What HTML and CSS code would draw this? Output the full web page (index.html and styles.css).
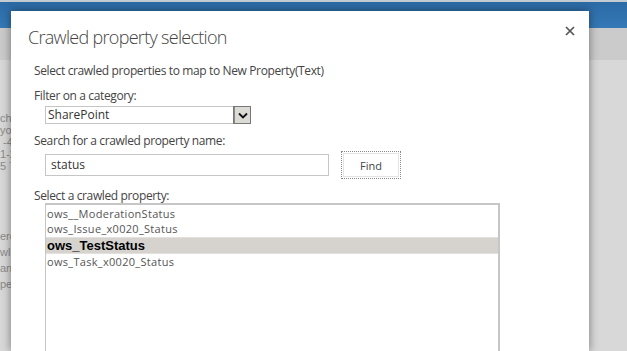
FILE: index.html
```html
<!DOCTYPE html>
<html lang="en">
<head>
    <meta charset="UTF-8">
    <title>Crawled property selection</title>
    <link rel="stylesheet" href="styles.css">
</head>
<body>

<div class="page">
    <div class="suite-bar"></div>
    <div class="ribbon"></div>
    <div class="page-body">
        <div class="page-text top">
            <div>ch</div>
            <div>yo</div>
            <div>&nbsp;-4</div>
            <div>1-2</div>
            <div>5 7</div>
        </div>
        <div class="page-text bottom">
            <div>erc</div>
            <div>wl</div>
            <div>ana</div>
            <div>pe</div>
        </div>
    </div>
</div>

<div class="dialog">
    <div class="dialog-head">
        <h1 class="dialog-title">Crawled property selection</h1>
        <span class="close-btn">
            <svg width="10" height="10" viewBox="0 0 10 10"><path d="M1 1 L9 9 M9 1 L1 9" stroke="#555" stroke-width="1.7"/></svg>
        </span>
    </div>
    <div class="dialog-body">
        <p class="intro">Select crawled properties to map to New Property(Text)</p>

        <div class="field">
            <label class="field-label">Filter on a category:</label>
            <div class="select">
                <span class="select-value">SharePoint</span>
                <span class="select-arrow">
                    <svg width="10" height="7" viewBox="0 0 10 7"><path d="M1 1.5 L5 5.5 L9 1.5" fill="none" stroke="#111" stroke-width="1.8"/></svg>
                </span>
            </div>
        </div>

        <div class="field">
            <label class="field-label">Search for a crawled property name:</label>
            <div class="search-row">
                <div class="text-input">status</div>
                <button class="find-btn">Find</button>
            </div>
        </div>

        <div class="field list-field">
            <label class="field-label">Select a crawled property:</label>
            <div class="listbox">
                <div class="list-item">ows__ModerationStatus</div>
                <div class="list-item">ows_Issue_x0020_Status</div>
                <div class="list-item selected">ows_TestStatus</div>
                <div class="list-item">ows_Task_x0020_Status</div>
            </div>
        </div>
    </div>
</div>

</body>
</html>
```

FILE: styles.css
```css
body {
    margin: 0;
    width: 627px;
    height: 351px;
    overflow: hidden;
    font-family: "Open Sans", "Noto Sans", sans-serif;
    background-color: #d8d8d8;
}
.page {
    display: flex;
    flex-direction: column;
    height: 100%;
}
.suite-bar {
    height: 28px;
    border-top: 2px solid #c3cbd3;
    box-sizing: border-box;
    background: linear-gradient(#2b6aa5, #3579b6);
}
.ribbon {
    height: 32px;
    background-color: #cbcbcb;
}
.page-body {
    flex: 1;
    padding-top: 52px;
}
.page-text {
    font-family: "Liberation Sans", sans-serif;
    font-size: 11px;
    line-height: 12px;
    color: #8a8a8a;
}
.page-text.bottom {
    margin-top: 56px;
    line-height: 16px;
}
.dialog {
    position: absolute;
    left: 11px;
    top: 11px;
    width: 578px;
    height: 340px;
    overflow: hidden;
    background-color: #fff;
    box-shadow: 0 0 9px rgba(0, 0, 0, 0.45);
}
.dialog-head {
    display: flex;
    justify-content: space-between;
    align-items: flex-start;
    height: 40px;
    box-sizing: border-box;
    padding: 13px 14px 0 17px;
}
.dialog-title {
    margin: 0;
    font-family: "Open Sans", sans-serif;
    font-weight: 300;
    font-size: 18px;
    line-height: 26px;
    letter-spacing: -0.7px;
    color: #444;
}
.close-btn {
    display: flex;
    margin-top: 2px;
}
.dialog-body {
    padding: 12px 0 0 23px;
    color: #444;
    font-size: 12px;
    line-height: 16px;
}
.intro {
    margin: 0 0 9px;
    letter-spacing: -0.37px;
}
.field {
    display: flex;
    flex-direction: column;
    margin-bottom: 9px;
}
.field-label {
    letter-spacing: -0.37px;
    margin-bottom: 2px;
}
.list-field {
    margin-top: 2px;
}
.select {
    display: flex;
    align-items: stretch;
    width: 206px;
    height: 18px;
    margin-left: 11px;
    border: 1px solid #c6c6c6;
    box-sizing: border-box;
}
.select-value {
    flex: 1;
    padding-left: 2px;
    color: #333;
}
.select-arrow {
    width: 15px;
    display: flex;
    align-items: center;
    justify-content: center;
    background-color: #dcdad5;
    border-left: 1px solid #888;
    outline: 1px solid #777;
}
.search-row {
    display: flex;
    align-items: center;
    gap: 12px;
    margin-left: 11px;
}
.text-input {
    width: 284px;
    height: 22px;
    box-sizing: border-box;
    border: 1px solid #c6c6c6;
    padding-left: 5px;
    line-height: 20px;
    color: #333;
}
.find-btn {
    width: 60px;
    height: 28px;
    border: 1px dotted #888;
    outline: 1px solid #e3e3e3;
    outline-offset: -3px;
    background-color: #fff;
    font-family: "Open Sans", sans-serif;
    font-size: 11px;
    color: #444;
}
.listbox {
    width: 455px;
    height: 160px;
    margin: -3px 0 0 11px;
    border: 1px solid #c6c6c6;
    border-top-width: 2px;
    border-right-width: 2px;
    box-sizing: border-box;
    padding-top: 1px;
}
.list-item {
    height: 15px;
    line-height: 15px;
    padding-left: 1px;
    color: #555;
    font-size: 11px;
    letter-spacing: 0.3px;
}
.list-item.selected {
    height: 17px;
    line-height: 15px;
    margin-top: 1px;
    background-color: #d6d3ce;
    color: #000;
    font-family: "Liberation Sans", sans-serif;
    font-weight: bold;
    font-size: 13px;
    letter-spacing: 0;
    border-top: 1px solid #e3e1dd;
    border-bottom: 1px solid #e3e1dd;
    box-sizing: border-box;
}
```
